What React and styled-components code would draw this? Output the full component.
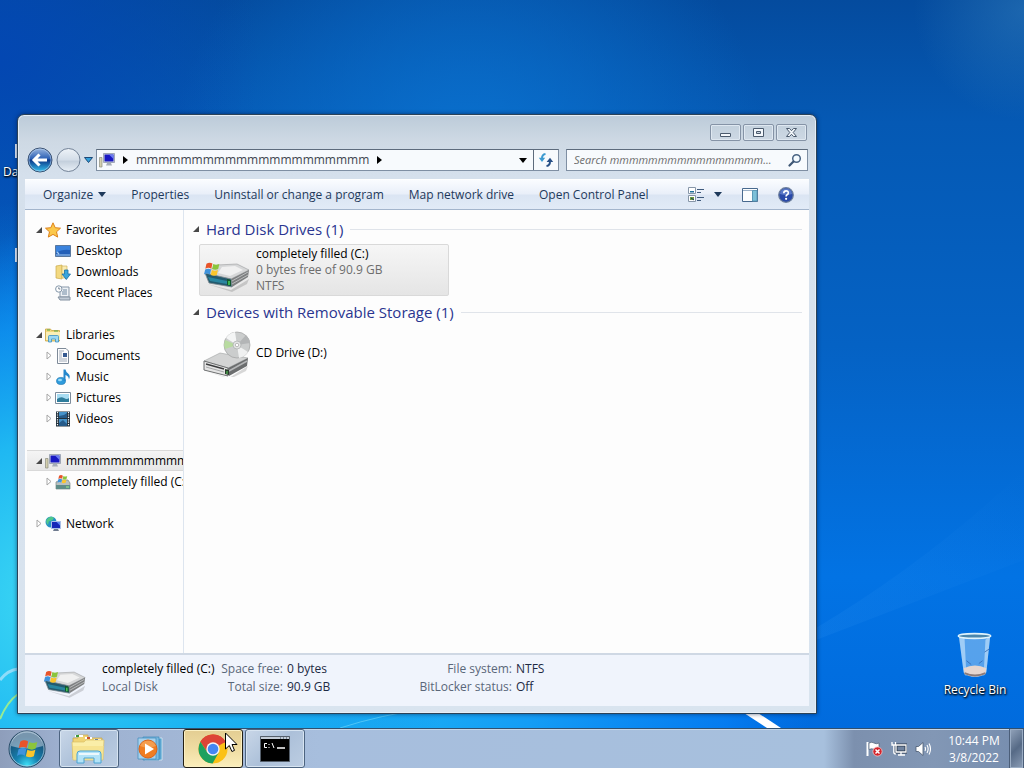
import React from 'react';
import styled, { createGlobalStyle, css } from 'styled-components';

const GlobalStyle = createGlobalStyle`
    * {
        box-sizing: border-box;
    }
    body {
        margin: 0;
        overflow: hidden;
        font-family: 'Open Sans', 'Noto Sans', sans-serif;
        font-size: 12px;
        line-height: 16px;
        color: #000;
    }
    button,
    input {
        font: inherit;
        color: inherit;
        margin: 0;
        padding: 0;
        border: 0;
        background: none;
    }
    ul,
    dl,
    dd,
    h2,
    p {
        margin: 0;
        padding: 0;
        list-style: none;
    }
    a {
        color: inherit;
        text-decoration: none;
    }
    svg {
        display: block;
        flex: none;
    }
`;

const computerName = 'mmmmmmmmmmmmmmmmmmmmm';

/* ---------- desktop ---------- */

const Desktop = styled.div`
    position: relative;
    display: flex;
    flex-direction: column;
    justify-content: flex-end;
    height: 100vh;
    overflow: hidden;
    background: #0670dc;
`;

const WallpaperSvg = styled.svg`
    position: absolute;
    inset: 0;
    width: 100%;
    height: 100%;
`;

const Shortcut = styled.a`
    position: absolute;
    display: flex;
    flex-direction: column;
    align-items: center;
    gap: 4px;
    color: #fff;
    text-shadow: 0 1px 2px #000, 1px 1px 2px #000;
`;

const LeftShortcut = styled(Shortcut)`
    left: 3px;
    top: ${(props) => props.$top}px;
    align-items: flex-start;
    svg {
        margin-left: 12px;
    }
`;

const BinShortcut = styled(Shortcut)`
    right: 10px;
    bottom: 70px;
    width: 78px;
    white-space: nowrap;
`;

/* ---------- window ---------- */

const Window = styled.main`
    position: absolute;
    left: 17px;
    right: 207px;
    top: 114px;
    bottom: 54px;
    display: flex;
    flex-direction: column;
    padding: 0 7px 7px;
    border: 1px solid #2b4257;
    border-radius: 7px 7px 0 0;
    background: linear-gradient(#bccbd9, #ced9e4 26px, #d5e0ec 60px, #d9e4ef);
    box-shadow: inset 0 0 0 1px #e6eef6, 0 0 4px rgba(0, 20, 60, 0.6);
`;

const Caption = styled.header`
    display: flex;
    justify-content: flex-end;
    gap: 2px;
    padding: 9px 2px 6px;
`;

const CaptionButton = styled.button`
    display: flex;
    align-items: center;
    justify-content: center;
    width: 31px;
    height: 17px;
    border: 1px solid #8593a6;
    border-radius: 2px;
    box-shadow: inset 0 0 0 1px #dfe8f1;
`;

const NavBar = styled.div`
    display: flex;
    align-items: center;
    height: 26px;
    padding: 0 1px 0 2px;
    margin-bottom: 6px;
`;

const TravelButtons = styled.div`
    display: flex;
    align-items: center;
    gap: 3px;
    margin-right: 3px;
`;

const fieldBox = css`
    display: flex;
    align-items: center;
    height: 22px;
    border: 1px solid #7f8fa3;
    border-top-color: #5d6b7c;
    background: #f7fafd;
`;

const AddressBar = styled.nav`
    ${fieldBox}
    flex: 1;
    min-width: 0;
    margin-right: 7px;
    color: #404650;
    > svg {
        margin-left: 2px;
    }
`;

const Crumb = styled.a`
    flex: 1;
    display: flex;
    align-items: center;
    gap: 8px;
    min-width: 0;
    padding-left: 8px;
    white-space: nowrap;
    overflow: hidden;
`;

const AddressButton = styled.button`
    display: flex;
    align-items: center;
    justify-content: center;
    width: ${(props) => props.$width}px;
    height: 20px;
    border-left: ${(props) => (props.$divider ? '1px solid #5d6b7c' : 0)};
`;

const SearchBox = styled.label`
    ${fieldBox}
    width: 242px;
    padding: 0 5px 0 7px;
    input {
        flex: 1;
        min-width: 0;
        outline: 0;
        font-size: 11px;
        font-style: italic;
    }
    input::placeholder {
        color: #6d6d6d;
        opacity: 1;
    }
`;

const CommandBar = styled.div`
    display: flex;
    align-items: center;
    height: 31px;
    padding: 0 15px 0 18px;
    gap: 25px;
    color: #1e395b;
    white-space: nowrap;
    background: linear-gradient(#fafcff, #e9eff9 14px, #dbe5f3 15px, #e2ebf7);
    border-top: 1px solid #fff;
    border-bottom: 1px solid #a3b5cc;
`;

const CommandButton = styled.button`
    display: flex;
    align-items: center;
    gap: 5px;
`;

const CommandIcons = styled.div`
    display: flex;
    align-items: center;
    gap: 20px;
    margin-left: auto;
`;

const ViewButton = styled(CommandButton)`
    gap: 10px;
`;

const Body = styled.div`
    flex: 1;
    display: flex;
    min-height: 0;
    background: #fdfdfd;
`;

const TreePane = styled.nav`
    display: flex;
    flex-direction: column;
    gap: 21px;
    width: 159px;
    padding-top: 9px;
    overflow: hidden;
    border-right: 1px solid #dde5ef;
`;

const TreeItem = styled.a`
    display: flex;
    align-items: center;
    height: 21px;
    padding-left: ${(props) => (props.$child ? 19 : 9)}px;
    white-space: nowrap;
    ${(props) =>
        props.$selected &&
        css`
            margin-left: 2px;
            padding-left: 7px;
            background: linear-gradient(#f5f5f5, #e6e6e6);
            box-shadow: inset 0 1px #d9d9d9, inset 0 -1px #d9d9d9;
        `}
`;

const Twisty = styled.span`
    flex: none;
    display: flex;
    justify-content: flex-end;
    width: 8px;
    margin-right: 3px;
`;

const TreeLabel = styled.span`
    margin-left: 5px;
`;

const FilePane = styled.section`
    flex: 1;
    min-width: 0;
    padding: 7px 7px 0 9px;
`;

const GroupHeader = styled.h2`
    display: flex;
    align-items: center;
    gap: 7px;
    height: 24px;
    margin-bottom: 3px;
    font-size: 15px;
    font-weight: 400;
    color: #2a3590;
    white-space: nowrap;
    &::after {
        content: '';
        flex: 1;
        height: 1px;
        background: #e0e4ea;
    }
`;

const Drive = styled.button`
    display: flex;
    align-items: center;
    gap: 5px;
    width: 250px;
    height: 52px;
    margin: 0 0 4px 6px;
    padding-left: 3px;
    text-align: left;
    border: 1px solid ${(props) => (props.$selected ? '#d9d9d9' : 'transparent')};
    border-radius: 2px;
    background: ${(props) => (props.$selected ? 'linear-gradient(#f6f6f6, #e5e5e5)' : 'none')};
`;

const DriveInfo = styled.span`
    display: flex;
    flex-direction: column;
    color: #6d6d6d;
    strong {
        font-weight: 400;
        color: #000;
    }
`;

const Details = styled.footer`
    display: flex;
    height: 53px;
    padding: 5px 0 0 18px;
    line-height: 18px;
    white-space: nowrap;
    color: #5a6779;
    background: #f0f4fc;
    border-top: 2px solid #cfd8e4;
    > svg {
        margin: 9px 15px 0 0;
    }
`;

const DetailsTitle = styled.div`
    width: 118px;
    strong {
        display: block;
        font-weight: 400;
        color: #000;
    }
`;

const Facts = styled.dl`
    display: grid;
    grid-template-columns: ${(props) => props.$label}px 1fr;
    grid-auto-rows: 18px;
    column-gap: 4px;
    width: ${(props) => props.$width}px;
    dt {
        text-align: right;
    }
    dd {
        color: #1e2a44;
    }
`;

/* ---------- taskbar ---------- */

const Taskbar = styled.footer`
    position: relative;
    display: flex;
    align-items: stretch;
    height: 40px;
    border-top: 1px solid #31506f;
    box-shadow: inset 0 1px #c7d8ea;
    background: linear-gradient(
        90deg,
        #8e9ebb,
        #9db0cf 60px,
        #a7bedd 320px,
        #a7c0dd calc(100% - 200px),
        #7c90ae calc(100% - 170px),
        #8297b5 calc(100% - 90px),
        #768dae
    );
`;

const StartButton = styled.button`
    width: 59px;
    padding-left: 7px;
`;

const TaskButtons = styled.div`
    display: flex;
    flex: 1;
    gap: 2px;
`;

const TaskButton = styled.button`
    display: flex;
    align-items: center;
    justify-content: center;
    width: 60px;
    height: 39px;
    border: 1px solid transparent;
    border-radius: 3px;
    ${(props) =>
        props.$open &&
        css`
            border-color: #4d6480;
            background: linear-gradient(135deg, #c9d7e8, #acc0d9 50%, #bccde2);
            box-shadow: inset 0 0 0 1px #d7e4f1;
        `}
    ${(props) =>
        props.$hot &&
        css`
            border-color: #241f12;
            background: linear-gradient(#e3cd92, #efdca2 50%, #fbeebb);
            box-shadow: inset 0 0 0 1px #fbf0c4;
        `}
`;

const Tray = styled.div`
    display: flex;
    align-items: center;
    gap: 8px;
    margin-right: 13px;
`;

const Clock = styled.time`
    width: 60px;
    padding-top: 3px;
    margin-right: 5px;
    text-align: center;
    line-height: 17px;
    color: #fff;
    white-space: nowrap;
`;

const ShowDesktop = styled.button`
    width: 15px;
    border: 1px solid #4b5e78;
    border-width: 0 1px;
    background: linear-gradient(135deg, #93a4bb, #566a86 50%, #8b9db6);
    box-shadow: inset 0 0 0 1px #9badc4;
`;

const Cursor = styled.svg`
    position: absolute;
    left: 225px;
    bottom: 15px;
`;

/* ---------- drawings ---------- */

const Wallpaper = () => (
    <WallpaperSvg viewBox="0 0 1024 768" preserveAspectRatio="none" aria-hidden="true">
        <defs>
            <linearGradient id="wpSky" x1="0" y1="0" x2="0" y2="1">
                <stop offset="0" stopColor="#044b9e" />
                <stop offset="0.16" stopColor="#0559b4" />
                <stop offset="0.45" stopColor="#0562c4" />
                <stop offset="0.75" stopColor="#0273e4" />
                <stop offset="1" stopColor="#0069dc" />
            </linearGradient>
            <radialGradient id="wpTop" gradientUnits="userSpaceOnUse" cx="470" cy="170" r="300">
                <stop offset="0" stopColor="#0a72d0" />
                <stop offset="1" stopColor="#0a72d0" stopOpacity="0" />
            </radialGradient>
            <radialGradient id="wpCorner" gradientUnits="userSpaceOnUse" cx="0" cy="60" r="260">
                <stop offset="0" stopColor="#0347b2" />
                <stop offset="1" stopColor="#0347b2" stopOpacity="0" />
            </radialGradient>
            <radialGradient id="wpGlow" gradientUnits="userSpaceOnUse" cx="60" cy="600" r="400">
                <stop offset="0" stopColor="#3edaf4" />
                <stop offset="0.4" stopColor="#1fb8f2" />
                <stop offset="1" stopColor="#0783e8" stopOpacity="0" />
            </radialGradient>
            <radialGradient id="wpFloor" gradientUnits="userSpaceOnUse" cx="250" cy="740" r="560">
                <stop offset="0" stopColor="#22bdf4" />
                <stop offset="0.5" stopColor="#149df5" />
                <stop offset="0.85" stopColor="#0680f4" stopOpacity="0.8" />
                <stop offset="1" stopColor="#0578f0" stopOpacity="0" />
            </radialGradient>
            <linearGradient id="wpRay" x1="0" y1="1" x2="1" y2="0">
                <stop offset="0" stopColor="#3a9cf5" stopOpacity="0.14" />
                <stop offset="1" stopColor="#3a9cf5" stopOpacity="0" />
            </linearGradient>
            <radialGradient id="wpHaze" gradientUnits="userSpaceOnUse" cx="1024" cy="10" r="110">
                <stop offset="0" stopColor="#3f8cc4" stopOpacity="0.4" />
                <stop offset="1" stopColor="#3f8cc4" stopOpacity="0" />
            </radialGradient>
        </defs>
        <path d="M0 0h1024v768H0z" fill="url(#wpSky)" />
        <path d="M0 0h1024v768H0z" fill="url(#wpTop)" />
        <path d="M0 0h1024v768H0z" fill="url(#wpCorner)" />
        <path d="M0 0h1024v768H0z" fill="url(#wpFloor)" />
        <path d="M0 0h1024v768H0z" fill="url(#wpGlow)" />
        <path d="M0 0h1024v768H0z" fill="url(#wpHaze)" />
        <path d="M816 628Q930 560 1024 470V560Q920 600 816 640z" fill="url(#wpRay)" />
        <path d="M744 713h14l23 15h-14z" fill="#fff" />
        <path d="M340 728Q380 715 430 708" stroke="#65d2f8" fill="none" opacity="0.7" />
        <path d="M0 680Q8 670 18 669" stroke="#8edcf9" strokeWidth="3" fill="none" />
        <path d="M0 719Q7 702 18 694" stroke="#96eb94" strokeWidth="2" fill="none" />
    </WallpaperSvg>
);

const FlagShape = () => (
    <g>
        <path d="M3 3.500C5.500 1.600 8 1.700 10.300 3.200L8.900 9.300C6.500 7.800 4.200 8 1.600 9.500z" fill="#e8542a" />
        <path d="M11.300 3.700C13.800 5 16 5 18.700 3.700L17.300 9.800C14.800 11.200 12.500 11 9.900 9.800z" fill="#8bc53c" />
        <path d="M1.400 10.500C4 9 6.300 9 8.600 10.400L7.200 16.500C4.800 15 2.500 15 0 16.600z" fill="#3f93dc" />
        <path d="M9.600 10.900C12.200 12.200 14.400 12.100 17 10.900L15.600 17C13.200 18.300 10.800 18.200 8.200 17z" fill="#fbc52c" />
    </g>
);

const DriveShape = () => (
    <g>
        <path d="M4 23l24 6 18-11-2 5-15 8z" fill="#000" opacity="0.15" />
        <path d="M14 4L34 3 46 9 28 18 2 13z" fill="#d6d7d8" stroke="#9a9c9e" strokeWidth="0.6" />
        <path d="M19 6l13-1 8 4-13 6-12-3z" fill="#f0f0f0" />
        <path d="M28 18L46 9 45 16 29 26z" fill="#7d7f80" />
        <path d="M29 20L45 11M29 23l16-9" stroke="#bcbebf" />
        <path d="M2 12l26 6 1 8-23-4z" fill="#245a6e" stroke="#7f8a90" strokeWidth="0.8" />
        <path d="M5 16l19 4v3L7 20z" fill="#2a86a0" />
        <path d="M24 18l4 1v6l-4-1z" fill="#11582d" />
        <path d="M26 20v4" stroke="#54e564" strokeWidth="1.300" />
        <g transform="translate(1 0) scale(0.82)">
            <FlagShape />
        </g>
    </g>
);

const DriveIcon = () => (
    <svg width="48" height="48" viewBox="0 0 48 48" aria-hidden="true">
        <g transform="translate(0 15)">
            <DriveShape />
        </g>
    </svg>
);

const DetailsDriveIcon = () => (
    <svg width="44" height="30" viewBox="0 0 48 32" aria-hidden="true">
        <DriveShape />
    </svg>
);

const CdDriveIcon = () => (
    <svg width="48" height="48" viewBox="0 0 48 48" aria-hidden="true">
        <g transform="translate(-1 4)">
            <path d="M3 38l24 7 19-12-2 5-16 8z" fill="#000" opacity="0.15" />
            <path d="M2 28l16-8 28 5-20 10z" fill="#d3d4d4" stroke="#a0a2a3" strokeWidth="0.6" />
            <path d="M26 35l20-10-1 8-18 10z" fill="#6c6e6f" />
            <path d="M27 38l18-10" stroke="#b5b7b8" strokeWidth="1.500" />
            <path d="M2 28l24 7v8L2 37z" fill="#e4e4e4" stroke="#6d6f70" />
            <path d="M4 31l18 5" stroke="#3a3b3c" strokeWidth="1.300" />
            <path d="M4 34l18 5" stroke="#a5a7a8" />
            <path d="M23 36l4 1v5l-4-1z" fill="#2b3b2c" />
            <path d="M25 38v3" stroke="#5ad95e" />
            <circle cx="35" cy="12" r="13" fill="#cbcdcd" stroke="#a0a2a2" strokeWidth="0.7" />
            <path d="M35 12L24 5a13 13 0 0 1 9-6z" fill="#f4f5f5" />
            <path d="M35 12L46 19a13 13 0 0 1-9 6z" fill="#f0f1f1" />
            <path d="M35 12L23 16a13 13 0 0 1 0-9z" fill="#b8dba0" />
            <path d="M35 12L44 2a13 13 0 0 1 4 8z" fill="#b3b5b6" />
            <circle cx="35" cy="12" r="4" fill="#e3e4e4" stroke="#a0a2a2" strokeWidth="0.6" />
            <circle cx="35" cy="12" r="1.700" fill="#fff" stroke="#999" strokeWidth="0.6" />
        </g>
    </svg>
);

const icons = {
    star: (
        <path
            d="M8 .8l2.200 4.900 5.300.5-4 3.600 1.200 5.300L8 12.400l-4.700 2.700 1.200-5.300-4-3.600 5.300-.5z"
            fill="#fbc84b"
            stroke="#dd8119"
        />
    ),
    desktop: (
        <g>
            <path d="M.5 2.500h15v11H.5z" fill="#2460b8" stroke="#59789e" />
            <path d="M1 3h14v4Q7 6 1 10z" fill="#3b83dd" />
            <path d="M1 12h14M2 9l2 2" stroke="#a4cbf3" strokeWidth="1.200" />
        </g>
    ),
    downloads: (
        <g>
            <path d="M1 2l6-1v14l-6-1z" fill="#f3d981" stroke="#c9a94b" strokeWidth="0.7" />
            <path d="M7 2h5v12H7z" fill="#f9ebb2" stroke="#d2b55b" strokeWidth="0.7" />
            <path d="M9.500 6h3.500v4h2.500L11.300 15.500 7 10h2.500z" fill="#3aa5dc" stroke="#1b6fa3" strokeWidth="0.8" />
        </g>
    ),
    recent: (
        <g>
            <path d="M5 2h9v10H5z" fill="#eef2f6" stroke="#8797a8" />
            <path d="M3 12h12v3H5z" fill="#c2ccd7" stroke="#8492a1" />
            <path d="M8 5h4M7 7h5M7 9h5" stroke="#6f88a1" />
            <circle cx="3.800" cy="4" r="3.200" fill="#fff" stroke="#8496a8" />
            <path d="M3.800 2.300V4h1.500" stroke="#4e6277" fill="none" strokeWidth="0.8" />
        </g>
    ),
    libraries: (
        <g>
            <path d="M.5 2h5l1 1.500h8V14H.5z" fill="#f3da7c" stroke="#c9a544" strokeWidth="0.8" />
            <path d="M1 5h14v8H1z" fill="#fbefb6" />
            <path d="M2 3h3M9 4h4" stroke="#56a54f" />
            <path d="M3.500 15V9.500q0-1 1-1h8q1 0 1 1V15h-3v-3h-4v3z" fill="#9cd8f4" stroke="#3a8fc2" strokeWidth="0.8" />
        </g>
    ),
    documents: (
        <g>
            <path d="M2.500.5H11l2.500 2.500v12.500h-11z" fill="#fdfdfe" stroke="#7e8a98" />
            <path d="M4 3h5M4 5h3M4 7h3M4 9h3M4 11h8M4 13h8" stroke="#8b98a8" strokeWidth="0.8" />
            <path d="M8 5h4v4H8z" fill="#365a91" />
        </g>
    ),
    music: (
        <g>
            <ellipse cx="6" cy="12" rx="4.500" ry="3.600" fill="#2f9bdc" stroke="#1b72ad" strokeWidth="0.6" />
            <path d="M8.500 12V.5h2q.4 2.500 2.600 4 2.800 2 .8 6 0-3.200-3.400-4.500v6z" fill="#2588cd" />
            <ellipse cx="5" cy="11" rx="2" ry="1.200" fill="#9bdcf7" />
        </g>
    ),
    pictures: (
        <g>
            <path d="M.5 2.500h15v11H.5z" fill="#fff" stroke="#7d8c9c" />
            <path d="M2 4h12v8H2z" fill="#a8dcf2" />
            <path d="M2 9q4-3 7-1t5 0v4H2z" fill="#2f7d9c" />
        </g>
    ),
    videos: (
        <g>
            <path d="M1 .5h14v15H1z" fill="#22313c" />
            <path d="M4 1h8v6H4zM4 8h8v7H4z" fill="#4592c9" />
            <path d="M4 5l5-1 3-2v5H4zM4 12l4-3 4 4v2H4z" fill="#255a89" />
            <path d="M2.500 1v14M13.500 1v14" stroke="#fff" strokeWidth="1.200" strokeDasharray="1.200 1.200" />
        </g>
    ),
    computer: (
        <g>
            <path d="M.5 5.500h2.500v9.500H.5z" fill="#d4cfae" stroke="#8b8c80" strokeWidth="0.7" />
            <path d="M4.500 1.500h11v9h-11z" fill="#d6dae2" stroke="#8e98a8" strokeWidth="0.8" />
            <path d="M5.500 2.500h9v7h-9z" fill="#1818c2" />
            <path d="M10 2.500h4.500V7z" fill="#6a7cf0" />
            <path d="M8 11h4l1 2.500H7z" fill="#a5acb8" />
        </g>
    ),
    drive: (
        <g>
            <path d="M1 8l4-2h8l2 3v6H1z" fill="#b9c0be" stroke="#7b8785" strokeWidth="0.7" />
            <path d="M1 11h14v4H1z" fill="#5f8c88" />
            <path d="M11 13h3" stroke="#9ef08b" />
            <g transform="translate(2.500 0) scale(0.52)">
                <FlagShape />
            </g>
        </g>
    ),
    network: (
        <g>
            <circle cx="6" cy="6" r="5.500" fill="#2592c5" />
            <path d="M2 3q4-4 7-1-2 4-5 3l-1 4q-3-3-1-6z" fill="#4fc78b" />
            <path d="M6.500 5.500h9v7h-9z" fill="#1627b8" stroke="#a9bfe8" />
            <path d="M11.500 6h3.500v3.500z" fill="#5c84f0" />
            <path d="M9 13h4l1 2H8z" fill="#6f7b8f" />
        </g>
    ),
};

const Icon = ({ name }) => (
    <svg width="16" height="16" viewBox="0 0 16 16" aria-hidden="true">
        {icons[name]}
    </svg>
);

const DownArrow = ({ fill = '#1e395b' }) => (
    <svg width="8" height="5" viewBox="0 0 8 5" aria-hidden="true">
        <path d="M0 0h8L4 5z" fill={fill} />
    </svg>
);

const RightArrow = () => (
    <svg width="5" height="8" viewBox="0 0 5 8" aria-hidden="true">
        <path d="M0 0v8l5-4z" fill="#000" />
    </svg>
);

const OpenArrow = () => (
    <svg width="6" height="6" viewBox="0 0 6 6" aria-hidden="true">
        <path d="M6 0v6H0z" fill="#484848" />
    </svg>
);

const ClosedArrow = () => (
    <svg width="6" height="9" viewBox="0 0 6 9" aria-hidden="true">
        <path d="M1 1v7l4-3.500z" fill="#fff" stroke="#a6a6a6" />
    </svg>
);

const BackIcon = () => (
    <svg width="26" height="26" viewBox="0 0 26 26" aria-hidden="true">
        <defs>
            <linearGradient id="back" x1="0" y1="0" x2="0" y2="1">
                <stop offset="0" stopColor="#9bb7e0" />
                <stop offset="0.45" stopColor="#2b5fb4" />
                <stop offset="0.5" stopColor="#0b3688" />
                <stop offset="1" stopColor="#36c5f0" />
            </linearGradient>
        </defs>
        <circle cx="13" cy="13" r="12" fill="url(#back)" stroke="#3b5272" />
        <circle cx="13" cy="13" r="11" fill="none" stroke="#b6cfec" opacity="0.6" />
        <path d="M12.500 7.500L7 13l5.500 5.500M8 13H20" stroke="#fff" strokeWidth="3" fill="none" />
    </svg>
);

const ForwardIcon = () => (
    <svg width="25" height="26" viewBox="0 0 25 26" aria-hidden="true">
        <defs>
            <linearGradient id="fwd" x1="0" y1="0" x2="0" y2="1">
                <stop offset="0" stopColor="#eef3f8" />
                <stop offset="0.5" stopColor="#d3dde8" />
                <stop offset="0.55" stopColor="#c3cfdc" />
                <stop offset="1" stopColor="#e9f0f7" />
            </linearGradient>
        </defs>
        <circle cx="12.500" cy="13" r="11.500" fill="url(#fwd)" stroke="#718196" />
    </svg>
);

const RefreshIcon = () => (
    <svg width="16" height="16" viewBox="0 0 16 16" aria-hidden="true">
        <path d="M7.500 2Q4 2.500 4 6.500" stroke="#3c9ad0" strokeWidth="2" fill="none" />
        <path d="M.8 5.800h6.400L4 10z" fill="#3c9ad0" />
        <path d="M8.500 14Q12 13.500 12 9.500" stroke="#274f86" strokeWidth="2" fill="none" />
        <path d="M8.600 10h6.600L12 5.800z" fill="#274f86" />
    </svg>
);

const SearchIcon = () => (
    <svg width="14" height="14" viewBox="0 0 14 14" aria-hidden="true">
        <circle cx="8.500" cy="5.500" r="3.800" fill="#f3faff" stroke="#4a6484" strokeWidth="1.500" />
        <path d="M5.500 8.500L1.500 12.500" stroke="#3d5674" strokeWidth="2.200" strokeLinecap="round" />
    </svg>
);

const ViewIcon = () => (
    <svg width="16" height="16" viewBox="0 0 16 16" aria-hidden="true">
        <path d="M.5.500h7v6h-7zM.5 8.500h7v6h-7z" fill="#fff" stroke="#8796a8" />
        <path d="M2 4h4v1.500H2z" fill="#1c6f9a" />
        <path d="M2 10h4v3H2z" fill="#6c9b3c" />
        <path d="M3 11l3 2" stroke="#1d3c5e" />
        <path d="M9 2.500h7M9 5.500h4M9 10.500h7M9 13.500h4" stroke="#405b7d" />
    </svg>
);

const PreviewIcon = () => (
    <svg width="16" height="14" viewBox="0 0 16 14" aria-hidden="true">
        <path d="M.5.500h15v13H.5z" fill="#fbfdfe" stroke="#47698e" />
        <path d="M1 2.500h14" stroke="#9bb1c8" />
        <path d="M10.500 2.500H15V13h-4.500z" fill="#7cc0d8" stroke="#5a9ab8" />
    </svg>
);

const HelpIcon = () => (
    <svg width="16" height="16" viewBox="0 0 16 16" aria-hidden="true">
        <circle cx="8" cy="8" r="7.300" fill="#2a4aa8" stroke="#6d7f9c" strokeWidth="1.200" />
        <path d="M2 7a6 5.500 0 0 1 12 0q-6 2-12 0z" fill="#6f8bd4" opacity="0.7" />
        <path d="M5.800 6.200q0-2.300 2.300-2.300t2.200 2q0 1.100-1.200 1.800-1 .6-1 1.700" stroke="#fff" strokeWidth="1.600" fill="none" />
        <circle cx="8.100" cy="11.800" r="1.100" fill="#fff" />
    </svg>
);

const captionIcons = {
    Minimize: <path d="M1.500 6.500h10v3h-10z" />,
    Restore: <path d="M1.500 1.500h10v8h-10zM4.500 4.500h4v2h-4z" fillRule="evenodd" />,
    Close: (
        <path d="M1.500 1.500h3L6.500 3.700l2-2.200h3L8.200 5.500l3.300 4h-3l-2-2.200-2 2.200h-3l3.300-4z" />
    ),
};

const RecycleBinIcon = () => (
    <svg width="38" height="46" viewBox="0 0 40 48" aria-hidden="true">
        <path d="M3 4l5 38q1 5 12 5t12-5l4-38z" fill="#bfe1fb" opacity="0.45" />
        <path d="M3 4l5 38q1 4 3 4L9 6zM36 4l-4 38q-1 3-3 4l2-38z" fill="#e5f5ff" opacity="0.5" />
        <path d="M8 38q12-6 24 0l-1 5q-4 4-11 4T9 43z" fill="#e6d6cf" />
        <path d="M9 43q11 5 22 0" stroke="#8c7b7a" strokeWidth="2" fill="none" />
        <path d="M11 30l5 4M24 33l4-3M30 21l6-4" stroke="#2f63ad" fill="none" opacity="0.8" />
        <ellipse cx="19.500" cy="4" rx="17" ry="2.500" fill="#4a86ac" stroke="#dff3fc" strokeWidth="1.600" />
    </svg>
);

const FileIcon = () => (
    <svg width="30" height="16" viewBox="0 0 30 16" aria-hidden="true">
        <path d="M0 0h30v14H0z" fill="#e9f1fb" />
    </svg>
);

const OrbIcon = () => (
    <svg width="40" height="40" viewBox="0 0 40 40" aria-hidden="true">
        <defs>
            <radialGradient id="orb" cx="0.5" cy="0.95" r="0.8">
                <stop offset="0" stopColor="#3fe0f7" />
                <stop offset="0.4" stopColor="#1581b0" />
                <stop offset="1" stopColor="#194a6e" />
            </radialGradient>
        </defs>
        <circle cx="20" cy="20" r="18" fill="url(#orb)" stroke="#244762" />
        <circle cx="20" cy="20" r="17" fill="none" stroke="#b9d3e6" opacity="0.7" />
        <path d="M4 17a16 15 0 0 1 32 0q-16 5-32 0z" fill="#d5e2ed" opacity="0.5" />
        <g transform="translate(10 9) scale(1.08)">
            <FlagShape />
        </g>
    </svg>
);

const ExplorerIcon = () => (
    <svg width="36" height="32" viewBox="0 0 36 32" aria-hidden="true">
        <path d="M2 5h5V2h10v3h14v20H2z" fill="#f0d475" stroke="#c7a347" strokeWidth="0.7" />
        <path d="M4 3h8M14 5h7M23 7h7" stroke="#fff" strokeWidth="2" />
        <path d="M5 3h3" stroke="#3d9a3c" strokeWidth="2" />
        <path d="M16 5h3" stroke="#c8542e" strokeWidth="2" />
        <path d="M24 7h3" stroke="#3867b4" strokeWidth="2" />
        <path d="M1 9h12l2-2h18l-1 20H2z" fill="#faeea8" stroke="#d9bf67" strokeWidth="0.7" />
        <path d="M2 13h31l-1 13H2z" fill="#f4dd83" opacity="0.6" />
        <path d="M6 30v-9q0-3 3-3h18q3 0 3 3v9h-7v-5H13v5z" fill="#b3e3f7" stroke="#4ba3d2" />
        <path d="M8 21h20" stroke="#fff" strokeWidth="1.500" />
    </svg>
);

const PlayerIcon = () => (
    <svg width="28" height="28" viewBox="0 0 28 28" aria-hidden="true">
        <path d="M8 3h17v22H8z" fill="#5aa5d0" stroke="#e1f2fa" strokeWidth="0.7" />
        <path d="M6 2h16v23H6z" fill="#7cbbe0" stroke="#3b87b8" strokeWidth="0.7" />
        <path d="M1 3h18v21H1z" fill="#a8d2ed" stroke="#4891bf" strokeWidth="0.8" />
        <circle cx="11" cy="14" r="9" fill="#ef7d22" stroke="#d9631a" />
        <path d="M3 11a8.500 8 0 0 1 16 0q-8 3-16 0z" fill="#f9b26c" opacity="0.6" />
        <path d="M8 8.500v11l9-5.500z" fill="#fff" />
    </svg>
);

const ChromeIcon = () => (
    <svg width="30" height="30" viewBox="0 0 30 30" aria-hidden="true">
        <circle cx="15" cy="15" r="14.500" fill="#fbc116" />
        <path d="M15 15L2.500 7.700A14.500 14.500 0 0 1 27.600 7.800z" fill="#dd4437" />
        <path d="M15 8.500h12.900A14.500 14.500 0 0 0 2.400 7.800L9.400 18.200z" fill="#dd4437" />
        <path d="M2.400 7.800A14.500 14.500 0 0 0 14.600 29.500L20.700 18.400 9.300 18.200z" fill="#1da15f" />
        <circle cx="15" cy="15" r="6.700" fill="#f5f5f5" />
        <circle cx="15" cy="15" r="5.300" fill="#4587f3" />
    </svg>
);

const ConsoleIcon = () => (
    <svg width="30" height="26" viewBox="0 0 30 26" aria-hidden="true">
        <path d="M.5.500h29v25H.5z" fill="#000" stroke="#555f6b" />
        <path d="M1 1h28v2H1z" fill="#c4cdd8" />
        <path d="M20 2h1M23 2h1M26 2h1" stroke="#33485e" />
        <path d="M7 7.500H4.500v4H7" stroke="#fff" fill="none" />
        <path d="M9 8v1M9 11v1M12 7l2 5" stroke="#fff" fill="none" />
        <path d="M17 12h8" stroke="#fff" strokeWidth="1.500" />
    </svg>
);

const FlagTrayIcon = () => (
    <svg width="17" height="16" viewBox="0 0 17 16" aria-hidden="true">
        <path d="M1.500 1v14" stroke="#fff" strokeWidth="2" />
        <path d="M3 2q3-1.500 5 0t5 0v7q-3 1-5-.5t-5 0z" fill="#fff" stroke="#4d5e74" strokeWidth="0.7" />
        <circle cx="11.500" cy="10.500" r="4.600" fill="#d4232b" stroke="#f4c9ca" strokeWidth="0.8" />
        <path d="M9.500 8.500l4 4M13.500 8.500l-4 4" stroke="#fff" strokeWidth="1.500" />
    </svg>
);

const NetworkTrayIcon = () => (
    <svg width="16" height="16" viewBox="0 0 16 16" aria-hidden="true">
        <path d="M5 4h10v7H5z" fill="#6f829e" stroke="#2d3b4e" strokeWidth="3" />
        <path d="M5 4h10v7H5zM10 11v3M7 14h7" fill="none" stroke="#fff" strokeWidth="1.300" />
        <path d="M1 1v3h3.500V1M2.800 4v7q0 2 2 2" fill="none" stroke="#fff" strokeWidth="1.300" />
    </svg>
);

const SpeakerIcon = () => (
    <svg width="16" height="16" viewBox="0 0 16 16" aria-hidden="true">
        <path d="M1 5.500h2.500L8 1.500v13l-4.500-4H1z" fill="#fff" stroke="#47586e" strokeWidth="0.8" />
        <path d="M10 6q1 2 0 4M12 4q2.300 4 0 8M14 2.500q3 5.500 0 11" fill="none" stroke="#fff" strokeWidth="1.100" />
    </svg>
);

/* ---------- content ---------- */

const commands = ['Properties', 'Uninstall or change a program', 'Map network drive', 'Open Control Panel'];

const tree = [
    {
        text: 'Favorites',
        icon: 'star',
        open: true,
        items: [
            { text: 'Desktop', icon: 'desktop', leaf: true },
            { text: 'Downloads', icon: 'downloads', leaf: true },
            { text: 'Recent Places', icon: 'recent', leaf: true },
        ],
    },
    {
        text: 'Libraries',
        icon: 'libraries',
        open: true,
        items: [
            { text: 'Documents', icon: 'documents' },
            { text: 'Music', icon: 'music' },
            { text: 'Pictures', icon: 'pictures' },
            { text: 'Videos', icon: 'videos' },
        ],
    },
    {
        text: computerName,
        icon: 'computer',
        open: true,
        selected: true,
        items: [{ text: 'completely filled (C:)', icon: 'drive' }],
    },
    { text: 'Network', icon: 'network', items: [] },
];

const TreeRow = ({ node, child }) => (
    <li>
        <TreeItem href="#" $child={child} $selected={node.selected}>
            <Twisty>{!node.leaf && (node.open ? <OpenArrow /> : <ClosedArrow />)}</Twisty>
            <Icon name={node.icon} />
            <TreeLabel>{node.text}</TreeLabel>
        </TreeItem>
    </li>
);

const ExplorerWindow = () => (
    <Window>
        <Caption>
            {Object.keys(captionIcons).map((name) => (
                <CaptionButton key={name} aria-label={name}>
                    <svg width="13" height="11" viewBox="0 0 13 11" fill="#f4f8fc" stroke="#4b5a6d" aria-hidden="true">
                        {captionIcons[name]}
                    </svg>
                </CaptionButton>
            ))}
        </Caption>
        <NavBar>
            <TravelButtons>
                <button aria-label="Back">
                    <BackIcon />
                </button>
                <button aria-label="Forward">
                    <ForwardIcon />
                </button>
                <button aria-label="Recent pages">
                    <svg width="9" height="6" viewBox="0 0 9 6" aria-hidden="true">
                        <path d="M.5.500h8l-4 5z" fill="#31a0dc" stroke="#1d4876" />
                    </svg>
                </button>
            </TravelButtons>
            <AddressBar aria-label="Address">
                <Icon name="computer" />
                <Crumb href="#">
                    <RightArrow />
                    {computerName}
                    <RightArrow />
                </Crumb>
                <AddressButton $width={20} aria-label="Previous locations">
                    <DownArrow fill="#000" />
                </AddressButton>
                <AddressButton $width={25} $divider aria-label="Refresh">
                    <RefreshIcon />
                </AddressButton>
            </AddressBar>
            <SearchBox>
                <input type="text" placeholder="Search mmmmmmmmmmmmmmmm..." aria-label="Search" />
                <SearchIcon />
            </SearchBox>
        </NavBar>
        <CommandBar>
            <CommandButton>
                Organize
                <DownArrow />
            </CommandButton>
            {commands.map((text) => (
                <CommandButton key={text}>{text}</CommandButton>
            ))}
            <CommandIcons>
                <ViewButton aria-label="Change your view">
                    <ViewIcon />
                    <DownArrow />
                </ViewButton>
                <CommandButton aria-label="Show the preview pane">
                    <PreviewIcon />
                </CommandButton>
                <CommandButton aria-label="Get help">
                    <HelpIcon />
                </CommandButton>
            </CommandIcons>
        </CommandBar>
        <Body>
            <TreePane>
                {tree.map((group) => (
                    <ul key={group.text}>
                        <TreeRow node={group} />
                        {group.items.map((item) => (
                            <TreeRow key={item.text} node={item} child />
                        ))}
                    </ul>
                ))}
            </TreePane>
            <FilePane>
                <GroupHeader>
                    <OpenArrow />
                    Hard Disk Drives (1)
                </GroupHeader>
                <Drive $selected>
                    <DriveIcon />
                    <DriveInfo>
                        <strong>completely filled (C:)</strong>
                        <span>0 bytes free of 90.9 GB</span>
                        <span>NTFS</span>
                    </DriveInfo>
                </Drive>
                <GroupHeader>
                    <OpenArrow />
                    Devices with Removable Storage (1)
                </GroupHeader>
                <Drive>
                    <CdDriveIcon />
                    <DriveInfo>
                        <strong>CD Drive (D:)</strong>
                    </DriveInfo>
                </Drive>
            </FilePane>
        </Body>
        <Details>
            <DetailsDriveIcon />
            <DetailsTitle>
                <strong>completely filled (C:)</strong>
                <p>Local Disk</p>
            </DetailsTitle>
            <Facts $label={63} $width={199}>
                <dt>Space free:</dt>
                <dd>0 bytes</dd>
                <dt>Total size:</dt>
                <dd>90.9 GB</dd>
            </Facts>
            <Facts $label={93} $width={180}>
                <dt>File system:</dt>
                <dd>NTFS</dd>
                <dt>BitLocker status:</dt>
                <dd>Off</dd>
            </Facts>
        </Details>
    </Window>
);

const App = () => {
    return (
        <>
            <GlobalStyle />
            <Desktop>
                <Wallpaper />
                <LeftShortcut href="#" $top={144}>
                    <FileIcon />
                    Da
                </LeftShortcut>
                <LeftShortcut href="#" $top={248} aria-label="File">
                    <FileIcon />
                </LeftShortcut>
                <BinShortcut href="#">
                    <RecycleBinIcon />
                    Recycle Bin
                </BinShortcut>
                <ExplorerWindow />
                <Taskbar>
                    <StartButton aria-label="Start">
                        <OrbIcon />
                    </StartButton>
                    <TaskButtons>
                        <TaskButton $open aria-label="Windows Explorer">
                            <ExplorerIcon />
                        </TaskButton>
                        <TaskButton aria-label="Media Player">
                            <PlayerIcon />
                        </TaskButton>
                        <TaskButton $hot aria-label="Chrome">
                            <ChromeIcon />
                        </TaskButton>
                        <TaskButton $open aria-label="Command Prompt">
                            <ConsoleIcon />
                        </TaskButton>
                    </TaskButtons>
                    <Tray>
                        <FlagTrayIcon />
                        <NetworkTrayIcon />
                        <SpeakerIcon />
                    </Tray>
                    <Clock>
                        10:44 PM
                        <br />
                        3/8/2022
                    </Clock>
                    <ShowDesktop aria-label="Show desktop" />
                    <Cursor width="13" height="21" viewBox="0 0 13 21" aria-hidden="true">
                        <path d="M.5 1v16l3.800-3.500 2.600 6 2.600-1.100L7 12.500h5z" fill="#fff" stroke="#000" />
                    </Cursor>
                </Taskbar>
            </Desktop>
        </>
    );
};

export default App;
